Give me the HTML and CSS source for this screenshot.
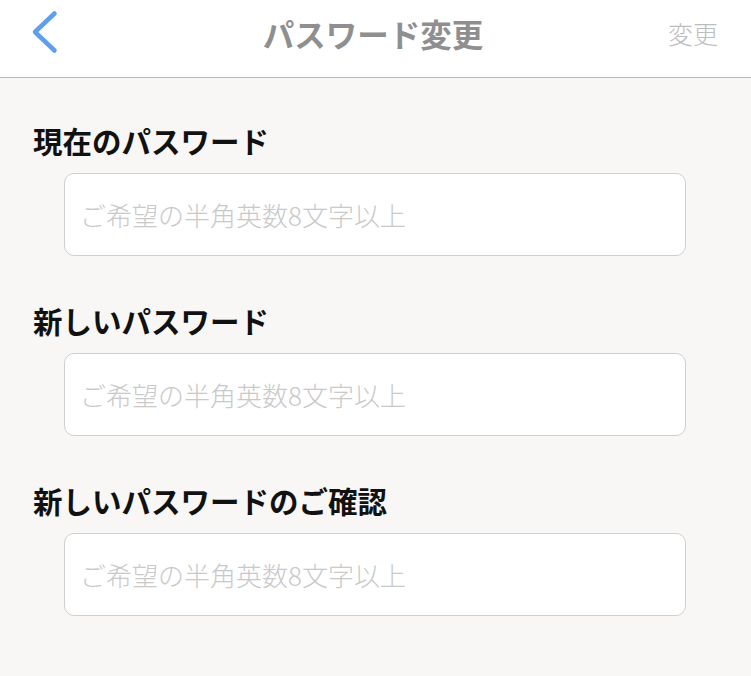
FILE: index.html
```html
<!DOCTYPE html>
<html lang="ja">
<head>
    <meta charset="UTF-8">
    <meta name="viewport" content="width=device-width, initial-scale=1.0">
    <title>パスワード変更</title>
    <link rel="stylesheet" href="styles.css">
</head>
<body>
    <!-- Header -->
    <header class="nav-bar">
        <button class="back-btn" aria-label="戻る">
            <svg width="34" height="50" viewBox="0 0 34 50">
                <polyline points="26.5,5.5 7,24 26.5,42.5" fill="none" stroke="#5f9fee" stroke-width="4.5" stroke-linecap="round" stroke-linejoin="round"/>
            </svg>
        </button>
        <h1 class="nav-title">パスワード変更</h1>
        <button class="nav-action">変更</button>
    </header>

    <!-- Form -->
    <main class="form">
        <div class="field">
            <label class="field-label">現在のパスワード</label>
            <input class="field-input" type="password" placeholder="ご希望の半角英数8文字以上">
        </div>
        <div class="field">
            <label class="field-label">新しいパスワード</label>
            <input class="field-input" type="password" placeholder="ご希望の半角英数8文字以上">
        </div>
        <div class="field">
            <label class="field-label">新しいパスワードのご確認</label>
            <input class="field-input" type="password" placeholder="ご希望の半角英数8文字以上">
        </div>
    </main>
</body>
</html>
```

FILE: styles.css
```css
* {
    margin: 0;
    padding: 0;
    box-sizing: border-box;
}

body {
    font-family: 'Noto Sans CJK JP', 'Noto Sans', sans-serif;
    background-color: #f8f7f6;
    height: 100vh;
    overflow: hidden;
}

.nav-bar {
    height: 78px;
    background-color: #fff;
    border-bottom: 1px solid #b8b8b8;
    display: flex;
    align-items: center;
    justify-content: space-between;
    padding: 0 33px 12px 28px;
}

.back-btn {
    background: none;
    border: none;
    width: 100px;
    display: flex;
    align-items: center;
}

.nav-title {
    font-size: 31.5px;
    font-weight: 700;
    color: #8f8f8f;
}

.nav-action {
    background: none;
    border: none;
    width: 100px;
    text-align: right;
    font-family: inherit;
    font-size: 25px;
    font-weight: 300;
    color: #bdbdbd;
}

.form {
    padding: 42px 65px 0 33px;
    display: flex;
    flex-direction: column;
    gap: 44px;
}

.field {
    display: flex;
    flex-direction: column;
}

.field-label {
    font-size: 29.5px;
    font-weight: 700;
    line-height: 40px;
    color: #111;
}

.field-input {
    margin: 13px 0 0 31px;
    height: 83px;
    border: 1px solid #cfcfcf;
    border-radius: 10px;
    background-color: #fff;
    padding: 0 15px;
    font-family: inherit;
    font-size: 26px;
    outline: none;
}

.field-input::placeholder {
    color: #c9c9c9;
    font-weight: 300;
}
```
